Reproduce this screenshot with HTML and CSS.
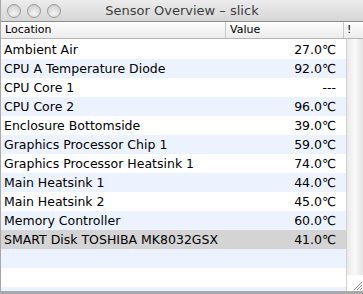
FILE: index.html
```html
<!DOCTYPE html>
<html>
<head>
	<title>Sensor Overview</title>
	<meta charset="utf-8">
	<link rel="stylesheet" href="styles.css">
</head>
<body>
	<div class="window">
		<div class="titlebar">
			<div class="lights">
				<span class="light"></span>
				<span class="light"></span>
				<span class="light"></span>
			</div>
			<div class="title">Sensor Overview – slick</div>
		</div>

		<div class="header">
			<div class="hcell loc">Location</div>
			<div class="hcell val">Value</div>
			<div class="hcell bang">!</div>
		</div>

		<div class="content">
			<div class="table">
				<div class="row"><span class="name">Ambient Air</span><span class="num">27.0℃</span></div>
				<div class="row"><span class="name">CPU A Temperature Diode</span><span class="num">92.0℃</span></div>
				<div class="row"><span class="name">CPU Core 1</span><span class="num">---</span></div>
				<div class="row"><span class="name">CPU Core 2</span><span class="num">96.0℃</span></div>
				<div class="row"><span class="name">Enclosure Bottomside</span><span class="num">39.0℃</span></div>
				<div class="row"><span class="name">Graphics Processor Chip 1</span><span class="num">59.0℃</span></div>
				<div class="row"><span class="name">Graphics Processor Heatsink 1</span><span class="num">74.0℃</span></div>
				<div class="row"><span class="name">Main Heatsink 1</span><span class="num">44.0℃</span></div>
				<div class="row"><span class="name">Main Heatsink 2</span><span class="num">45.0℃</span></div>
				<div class="row"><span class="name">Memory Controller</span><span class="num">60.0℃</span></div>
				<div class="row selected"><span class="name">SMART Disk TOSHIBA MK8032GSX</span><span class="num">41.0℃</span></div>
				<div class="row"></div>
				<div class="row"></div>
				<div class="row"></div>
			</div>
			<div class="scroll">
				<div class="track"></div>
				<div class="grip">
					<svg width="12" height="12" viewBox="0 0 12 12">
						<path d="M11 3 L3 11 M11 6 L6 11 M11 9 L9 11" stroke="#8a8a8a" stroke-width="1"/>
					</svg>
				</div>
			</div>
		</div>
	</div>
</body>
</html>
```

FILE: styles.css
```css
html, body{
	margin: 0;
	padding: 0;
	background: #fff;
}

.window{
	width: 363px;
	height: 294px;
	display: flex;
	flex-direction: column;
	font-family: "DejaVu Sans", "Liberation Sans", sans-serif;
	font-size: 12.5px;
	color: #000;
	overflow: hidden;
	box-sizing: border-box;
	border-left: 1px solid #a8a8a8;
	border-bottom: 3px solid #a8a8a8;
}

.titlebar{
	height: 21px;
	display: flex;
	align-items: center;
	position: relative;
	background: linear-gradient(#ececec, #d6d6d6);
	border-bottom: 1px solid #8c8c8c;
	flex-shrink: 0;
}

.lights{
	display: flex;
	gap: 6px;
	padding-left: 6px;
}

.light{
	width: 14px;
	height: 14px;
	border-radius: 50%;
	border: 1px solid #9a9a9a;
	background: radial-gradient(circle at 50% 70%, #f4f4f4, #c6c6c6);
	box-sizing: border-box;
}

.title{
	position: absolute;
	left: 0;
	right: 0;
	text-align: center;
	font-size: 13px;
	color: #3d3d3d;
}

.header{
	height: 16px;
	display: flex;
	background: linear-gradient(#fdfdfd, #ececec);
	border-bottom: 1px solid #b5b5b5;
	font-size: 11px;
	line-height: 16px;
	flex-shrink: 0;
}

.hcell{
	padding-left: 4px;
	box-sizing: border-box;
	border-right: 1px solid #c8c8c8;
}

.loc{ width: 225px; }
.val{ width: 118px; }
.bang{ flex: 1; border-right: none; padding-left: 3px; }

.content{
	flex: 1;
	display: flex;
	overflow: hidden;
}

.table{
	flex: 1;
	padding-top: 1px;
}

.row{
	height: 19px;
	line-height: 20px;
	display: flex;
	justify-content: space-between;
	padding: 0 10px 0 3px;
}

.row:nth-child(even){
	background: #edf3fe;
}

.row.selected{
	background: #d4d4d4;
}

.scroll{
	width: 16px;
	display: flex;
	flex-direction: column;
	border-left: 1px solid #d0d0d0;
}

.track{
	flex: 1;
	background: linear-gradient(to right, #e9e9e9, #fafafa 50%, #e4e4e4);
}

.grip{
	height: 16px;
	display: flex;
	align-items: flex-end;
	justify-content: flex-end;
	background: #fff;
}
```
